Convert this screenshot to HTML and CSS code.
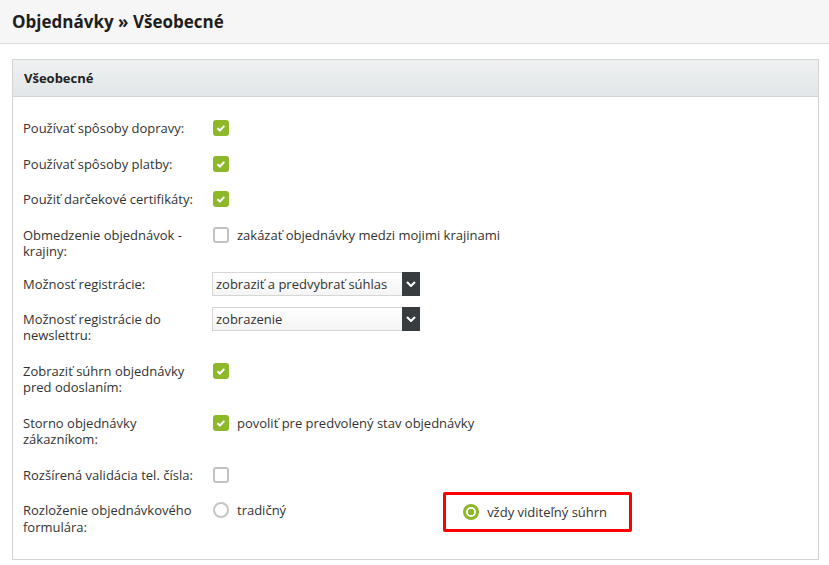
FILE: index.html
```html
<!DOCTYPE html>
<html lang="sk">
<head>
  <meta charset="UTF-8">
  <title>Objednávky » Všeobecné</title>
  <link rel="stylesheet" href="styles.css">
</head>
<body>
  <div class="topbar">
    <h1>Objednávky » Všeobecné</h1>
  </div>

  <div class="panel">
    <div class="panel-head">Všeobecné</div>
    <div class="panel-body">

      <div class="row">
        <div class="label">Používať spôsoby dopravy:</div>
        <div class="field"><span class="check on"></span></div>
      </div>

      <div class="row">
        <div class="label">Používať spôsoby platby:</div>
        <div class="field"><span class="check on"></span></div>
      </div>

      <div class="row">
        <div class="label">Použiť darčekové certifikáty:</div>
        <div class="field"><span class="check on"></span></div>
      </div>

      <div class="row">
        <div class="label">Obmedzenie objednávok - krajiny:</div>
        <div class="field"><span class="check"></span><span class="opt">zakázať objednávky medzi mojimi krajinami</span></div>
      </div>

      <div class="row row-select">
        <div class="label">Možnosť registrácie:</div>
        <div class="field">
          <div class="select"><span class="select-text">zobraziť a predvybrať súhlas</span><span class="select-btn"><svg width="10" height="6" viewBox="0 0 10 6"><path d="M1 1l4 4 4-4" fill="none" stroke="#fff" stroke-width="2"/></svg></span></div>
        </div>
      </div>

      <div class="row row-select-next">
        <div class="label">Možnosť registrácie do newslettru:</div>
        <div class="field">
          <div class="select"><span class="select-text">zobrazenie</span><span class="select-btn"><svg width="10" height="6" viewBox="0 0 10 6"><path d="M1 1l4 4 4-4" fill="none" stroke="#fff" stroke-width="2"/></svg></span></div>
        </div>
      </div>

      <div class="row">
        <div class="label">Zobraziť súhrn objednávky pred odoslaním:</div>
        <div class="field"><span class="check on"></span></div>
      </div>

      <div class="row">
        <div class="label">Storno objednávky zákazníkom:</div>
        <div class="field"><span class="check on"></span><span class="opt">povoliť pre predvolený stav objednávky</span></div>
      </div>

      <div class="row">
        <div class="label">Rozšírená validácia tel. čísla:</div>
        <div class="field"><span class="check"></span></div>
      </div>

      <div class="row">
        <div class="label">Rozloženie objednávkového formulára:</div>
        <div class="field">
          <span class="radio"></span><span class="opt">tradičný</span>
          <span class="marked"><span class="radio on"></span><span class="opt">vždy viditeľný súhrn</span></span>
        </div>
      </div>

    </div>
  </div>
</body>
</html>
```

FILE: styles.css
```css
body { margin: 0; font-family: "Open Sans", Arial, sans-serif; font-size: 13px; color: #333; background: #fff; }

.topbar { height: 43px; background: #f6f6f6; border-bottom: 1px solid #dcdcdc; padding: 0 12px; display: flex; align-items: center; }
.topbar h1 { margin: 0; font-size: 17px; font-weight: 700; color: #1e1e1e; }

.panel { margin: 15px 10px 0 12px; border: 1px solid #d3d3d3; }
.panel-head { height: 36px; line-height: 36px; padding: 0 11px; font-weight: 700; color: #222; background: linear-gradient(#eff1f2, #e2e6e8); border-bottom: 1px solid #d3d3d3; }
.panel-body { padding: 23px 10px 24px 10px; display: flex; flex-direction: column; gap: 19px; }

.row { display: flex; align-items: flex-start; line-height: 16.5px; }
.row-select { margin-top: -2.5px; }
.row-select-next { margin-top: -1px; }
.label { width: 180px; padding-right: 10px; flex: none; }
.field { display: flex; align-items: center; min-height: 16.5px; }

.check { width: 16px; height: 16px; box-sizing: border-box; border: 2px solid #c2c2c2; border-radius: 3px; background: #fff; flex: none; }
.check.on { border: none; background: #8db82a url("data:image/svg+xml,%3Csvg xmlns='http://www.w3.org/2000/svg' width='16' height='16'%3E%3Cpath d='M4.5 8.2l2.4 2.3 4.4-4.6' fill='none' stroke='%23fff' stroke-width='2'/%3E%3C/svg%3E") no-repeat center; }

.radio { width: 16px; height: 16px; box-sizing: border-box; border: 2px solid #c6c6c6; border-radius: 50%; background: #fff; flex: none; }
.radio.on { border: 3px solid #8db82a; background: radial-gradient(circle, #8db82a 0 3px, #fff 3.5px); }

.opt { margin-left: 8px; }

.select { width: 208px; height: 24px; box-sizing: border-box; border: 1px solid #d6d6d6; background: linear-gradient(#fff, #f4f4f4); display: flex; margin: -4px 0 -4px -1px; }
.select-text { flex: 1; padding-left: 3px; line-height: 22px; }
.select-btn { width: 18px; background: #363c40; display: flex; align-items: center; justify-content: center; margin: -1px -1px -1px 0; }

.marked { display: flex; align-items: center; margin: -10.5px 0 -13.5px 157px; padding: 0 22px 0 17px; height: 34px; border: 3px solid #f00; border-radius: 2px; }
```
